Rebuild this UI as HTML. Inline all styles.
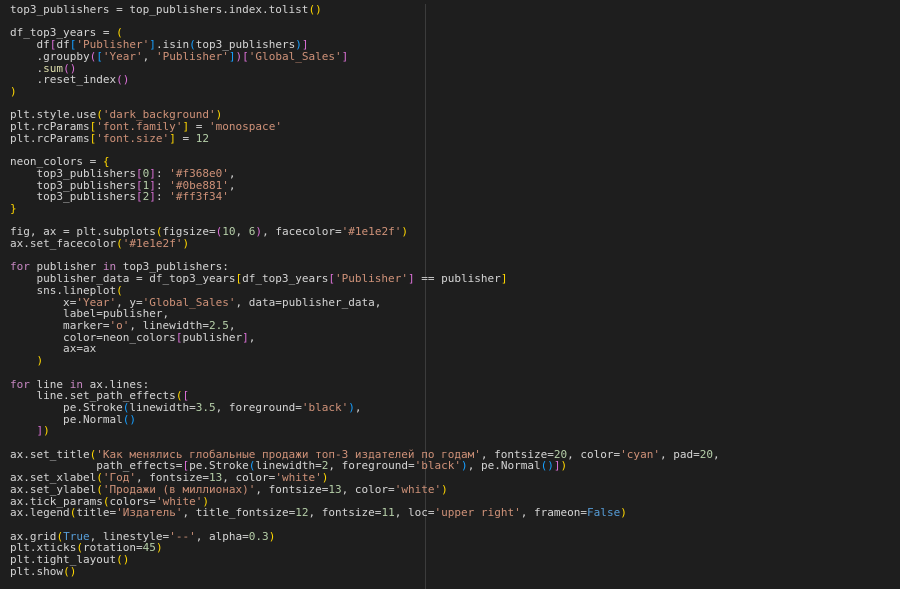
<!DOCTYPE html>
<html><head><meta charset="utf-8"><style>
html,body{margin:0;padding:0;width:900px;height:589px;overflow:hidden;background:#1e1e1e}
pre{margin:0;position:absolute;left:10px;top:4px;font-family:"DejaVu Sans Mono","Liberation Mono",monospace;font-size:11.03px;line-height:11.71px;color:#d4d4d4}
.s{color:#ce9178}.n{color:#b5cea8}.k{color:#c586c0}.b{color:#569cd6}.f{color:#dcdcaa}
.y{color:#ffd700}.p{color:#da70d6}.u{color:#179fff}
.vl{position:absolute;left:425px;top:4px;width:1px;height:585px;background:#3c3c3c}
</style></head><body>
<div class="vl"></div>
<pre>top3_publishers = top_publishers.index.tolist<span class="y">()</span>

df_top3_years = <span class="y">(</span>
    df<span class="p">[</span>df<span class="u">[</span><span class="s">'Publisher'</span><span class="u">]</span>.isin<span class="u">(</span>top3_publishers<span class="u">)</span><span class="p">]</span>
    .groupby<span class="p">(</span><span class="u">[</span><span class="s">'Year'</span>, <span class="s">'Publisher'</span><span class="u">]</span><span class="p">)[</span><span class="s">'Global_Sales'</span><span class="p">]</span>
    .<span class="f">sum</span><span class="p">()</span>
    .reset_index<span class="p">()</span>
<span class="y">)</span>

plt.style.use<span class="y">(</span><span class="s">'dark_background'</span><span class="y">)</span>
plt.rcParams<span class="y">[</span><span class="s">'font.family'</span><span class="y">]</span> = <span class="s">'monospace'</span>
plt.rcParams<span class="y">[</span><span class="s">'font.size'</span><span class="y">]</span> = <span class="n">12</span>

neon_colors = <span class="y">{</span>
    top3_publishers<span class="p">[</span><span class="n">0</span><span class="p">]</span>: <span class="s">'#f368e0'</span>,
    top3_publishers<span class="p">[</span><span class="n">1</span><span class="p">]</span>: <span class="s">'#0be881'</span>,
    top3_publishers<span class="p">[</span><span class="n">2</span><span class="p">]</span>: <span class="s">'#ff3f34'</span>
<span class="y">}</span>

fig, ax = plt.subplots<span class="y">(</span>figsize=<span class="p">(</span><span class="n">10</span>, <span class="n">6</span><span class="p">)</span>, facecolor=<span class="s">'#1e1e2f'</span><span class="y">)</span>
ax.set_facecolor<span class="y">(</span><span class="s">'#1e1e2f'</span><span class="y">)</span>

<span class="k">for</span> publisher <span class="k">in</span> top3_publishers:
    publisher_data = df_top3_years<span class="y">[</span>df_top3_years<span class="p">[</span><span class="s">'Publisher'</span><span class="p">]</span> == publisher<span class="y">]</span>
    sns.lineplot<span class="y">(</span>
        x=<span class="s">'Year'</span>, y=<span class="s">'Global_Sales'</span>, data=publisher_data,
        label=publisher,
        marker=<span class="s">'o'</span>, linewidth=<span class="n">2.5</span>,
        color=neon_colors<span class="p">[</span>publisher<span class="p">]</span>,
        ax=ax
    <span class="y">)</span>

<span class="k">for</span> line <span class="k">in</span> ax.lines:
    line.set_path_effects<span class="y">(</span><span class="p">[</span>
        pe.Stroke<span class="u">(</span>linewidth=<span class="n">3.5</span>, foreground=<span class="s">'black'</span><span class="u">)</span>,
        pe.Normal<span class="u">()</span>
    <span class="p">]</span><span class="y">)</span>

ax.set_title<span class="y">(</span><span class="s">'Как менялись глобальные продажи топ-3 издателей по годам'</span>, fontsize=<span class="n">20</span>, color=<span class="s">'cyan'</span>, pad=<span class="n">20</span>,
             path_effects=<span class="p">[</span>pe.Stroke<span class="u">(</span>linewidth=<span class="n">2</span>, foreground=<span class="s">'black'</span><span class="u">)</span>, pe.Normal<span class="u">()</span><span class="p">]</span><span class="y">)</span>
ax.set_xlabel<span class="y">(</span><span class="s">'Год'</span>, fontsize=<span class="n">13</span>, color=<span class="s">'white'</span><span class="y">)</span>
ax.set_ylabel<span class="y">(</span><span class="s">'Продажи (в миллионах)'</span>, fontsize=<span class="n">13</span>, color=<span class="s">'white'</span><span class="y">)</span>
ax.tick_params<span class="y">(</span>colors=<span class="s">'white'</span><span class="y">)</span>
ax.legend<span class="y">(</span>title=<span class="s">'Издатель'</span>, title_fontsize=<span class="n">12</span>, fontsize=<span class="n">11</span>, loc=<span class="s">'upper right'</span>, frameon=<span class="b">False</span><span class="y">)</span>

ax.grid<span class="y">(</span><span class="b">True</span>, linestyle=<span class="s">'--'</span>, alpha=<span class="n">0.3</span><span class="y">)</span>
plt.xticks<span class="y">(</span>rotation=<span class="n">45</span><span class="y">)</span>
plt.tight_layout<span class="y">()</span>
plt.show<span class="y">()</span></pre>
</body></html>
